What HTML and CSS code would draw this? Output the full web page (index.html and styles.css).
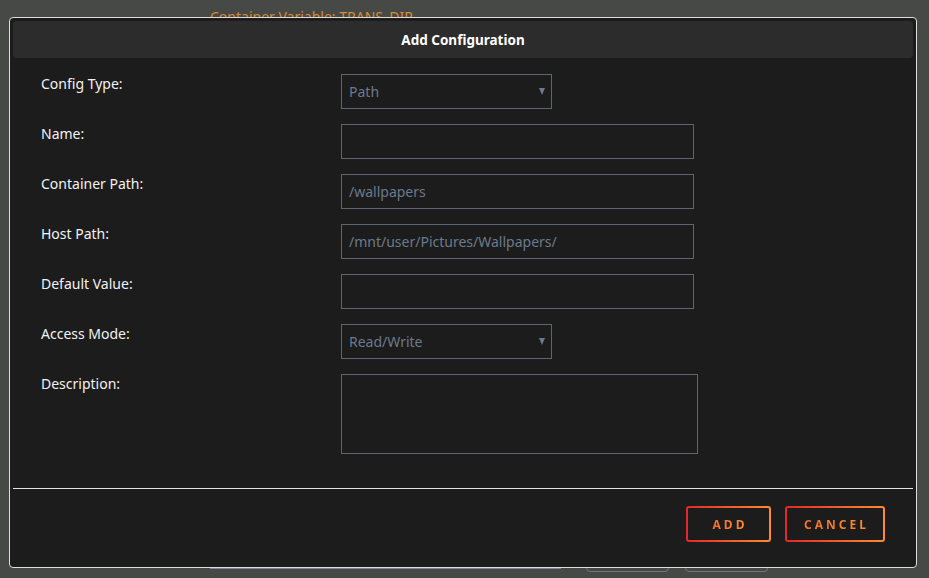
FILE: index.html
```html
<!DOCTYPE html>
<html lang="en">
  <head>
    <meta charset="UTF-8" />
    <meta name="viewport" content="width=device-width, initial-scale=1.0" />
    <title>Add Configuration</title>
    <link rel="stylesheet" href="styles.css">
  </head>
  <body>
    <!-- page underneath the dialog -->
    <div class="page">
      <div class="var-title">Container Variable: TRANS_DIR</div>
      <div class="page-row">
        <div class="bg-field"></div>
        <div class="bg-btn"></div>
        <div class="bg-btn"></div>
      </div>
    </div>

    <div class="modal">
      <div class="modal-title">Add Configuration</div>

      <form class="config-form">
        <label for="configType">Config Type:</label>
        <div class="select-wrap">
          <select id="configType" class="field field-select">
            <option>Path</option>
            <option>Port</option>
            <option>Variable</option>
            <option>Label</option>
            <option>Device</option>
          </select>
        </div>

        <label for="name">Name:</label>
        <input type="text" id="name" class="field" />

        <label for="containerPath">Container Path:</label>
        <input type="text" id="containerPath" class="field" value="/wallpapers" />

        <label for="hostPath">Host Path:</label>
        <input type="text" id="hostPath" class="field" value="/mnt/user/Pictures/Wallpapers/" />

        <label for="defaultValue">Default Value:</label>
        <input type="text" id="defaultValue" class="field" />

        <label for="accessMode">Access Mode:</label>
        <div class="select-wrap">
          <select id="accessMode" class="field field-select">
            <option>Read/Write</option>
            <option>Read Only</option>
          </select>
        </div>

        <label for="description">Description:</label>
        <textarea id="description" class="field field-area"></textarea>
      </form>

      <hr class="divider" />

      <div class="modal-buttons">
        <button class="btn btn-add"><span>ADD</span></button>
        <button class="btn btn-cancel"><span>CANCEL</span></button>
      </div>
    </div>
  </body>
</html>
```

FILE: styles.css
```css
* {
  box-sizing: border-box;
}

body {
  margin: 0;
  height: 578px;
  overflow: hidden;
  background-color: #474946;
  font-family: "Noto Sans", "Open Sans", sans-serif;
  font-size: 14px;
  color: #f2f2f2;
}

/* background page */
.page {
  height: 578px;
  display: flex;
  flex-direction: column;
  justify-content: space-between;
  padding: 7px 0 0 210px;
}

.var-title {
  color: #d98a34;
  font-size: 14px;
}

.page-row {
  display: flex;
  align-items: flex-end;
  margin-bottom: 6px;
}

.bg-field {
  width: 351px;
  height: 30px;
  border: 1px solid #7f8692;
  margin-bottom: 3px;
}

.bg-btn {
  width: 83px;
  height: 30px;
  border: 1px solid #6f7581;
  border-radius: 4px;
  margin-left: 25px;
}

.bg-btn + .bg-btn {
  margin-left: 16px;
}

/* dialog */
.modal {
  position: absolute;
  top: 17px;
  left: 9px;
  width: 908px;
  height: 551px;
  padding: 3px;
  background-color: #1c1c1c;
  border: 1px solid #dedede;
  border-radius: 4px;
  display: flex;
  flex-direction: column;
}

.modal-title {
  height: 37px;
  background-color: #2c2c2c;
  border-radius: 4px;
  color: #fff;
  font-size: 13.5px;
  font-weight: bold;
  display: flex;
  align-items: center;
  justify-content: center;
}

.config-form {
  display: grid;
  grid-template-columns: 300px auto;
  row-gap: 15px;
  padding: 16px 0 0 28px;
  align-items: start;
  justify-items: start;
}

.config-form label {
  line-height: 19px;
}

.field {
  width: 353px;
  height: 35px;
  padding: 0 7px;
  margin: 0;
  background-color: transparent;
  border: 1px solid #5b6573;
  border-radius: 0;
  color: #6b7a8d;
  font-family: inherit;
  font-size: 14px;
  outline: none;
}

.select-wrap {
  position: relative;
}

/* small filled arrow on the right of the select */
.select-wrap::after {
  content: '';
  position: absolute;
  right: 7px;
  top: 14px;
  border-left: 3px solid transparent;
  border-right: 3px solid transparent;
  border-top: 7px solid #6b7a8d;
  pointer-events: none;
}

.field-select {
  width: 211px;
  appearance: none;
  -webkit-appearance: none;
}

.field-area {
  width: 357px;
  height: 80px;
  resize: none;
}

.divider {
  margin: 34px 0 0;
  border: none;
  border-top: 1px solid #e4e4e4;
}

.modal-buttons {
  display: flex;
  justify-content: flex-end;
  gap: 14px;
  padding: 17px 28px 0 0;
}

.btn {
  height: 36px;
  padding: 0;
  border: 2px solid transparent;
  border-radius: 3px;
  background: linear-gradient(#1c1c1c, #1c1c1c) padding-box,
    linear-gradient(90deg, #e22828, #ff8c2f) border-box;
  font-family: inherit;
  font-size: 12px;
  font-weight: bold;
  letter-spacing: 3px;
  cursor: pointer;
}

.btn span {
  padding-left: 3px;
  background: linear-gradient(90deg, #f06f2c, #ff8c2f);
  -webkit-background-clip: text;
  background-clip: text;
  color: transparent;
}

.btn-add {
  width: 85px;
}

.btn-cancel {
  width: 100px;
}
```
